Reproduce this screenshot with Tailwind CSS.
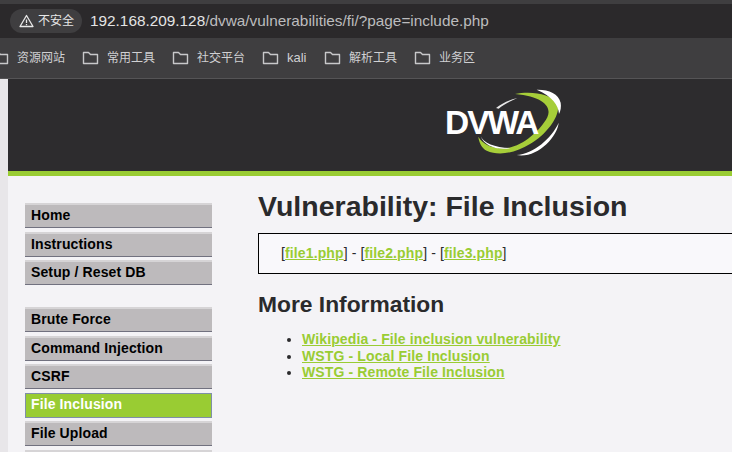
<!DOCTYPE html>
<html lang="en">
<head>
<meta charset="UTF-8">
<title>DVWA File Inclusion</title>
<script src="https://cdn.jsdelivr.net/npm/@tailwindcss/browser@4"></script>
</head>
<body class="w-[732px] h-[452px] overflow-hidden bg-[#f4f3f6] font-['Liberation_Sans','Noto_Sans_CJK_SC',sans-serif]">
  <!-- browser chrome -->
  <div class="h-[79px] bg-[#3f3e40] border-b border-[#555456] pt-[4px]">
    <div class="h-[34px] bg-[#2b292b] flex items-center pl-[10px]">
      <div class="h-[24px] w-[72px] rounded-full bg-[#3f3e40] flex items-center pl-[9px] gap-[4px] text-[12px] text-[#e6e6e6] shrink-0">
        <svg width="15" height="14" viewBox="0 0 15 14" fill="none" stroke="#e8e8e8" stroke-width="1.3"><path d="M7.5 1.5 L14 12.5 H1 Z" stroke-linejoin="round"/><path d="M7.5 5.5 V9 M7.5 10 V11.2"/></svg>
        <span>不安全</span>
      </div>
      <div class="ml-[8px] text-[15.35px] text-[#e4e4e4] whitespace-nowrap">192.168.209.128<span class="text-[#bcbcbe]">/dvwa/vulnerabilities/fi/?page=include.php</span></div>
    </div>
    <div class="h-[40px] flex items-center text-[12px] text-[#d0d0d2] -ml-[8px]">
      <div class="flex items-center w-[90px] gap-[8px]"><svg width="17" height="14" viewBox="0 0 17 14" fill="none" stroke="#c8c8ca" stroke-width="1.4"><path d="M1.5 12.5 V1.5 H6.5 L8.5 3.5 H15.5 V12.5 Z" stroke-linejoin="round"/></svg><span>资源网站</span></div>
      <div class="flex items-center w-[90px] gap-[8px]"><svg width="17" height="14" viewBox="0 0 17 14" fill="none" stroke="#c8c8ca" stroke-width="1.4"><path d="M1.5 12.5 V1.5 H6.5 L8.5 3.5 H15.5 V12.5 Z" stroke-linejoin="round"/></svg><span>常用工具</span></div>
      <div class="flex items-center w-[90px] gap-[8px]"><svg width="17" height="14" viewBox="0 0 17 14" fill="none" stroke="#c8c8ca" stroke-width="1.4"><path d="M1.5 12.5 V1.5 H6.5 L8.5 3.5 H15.5 V12.5 Z" stroke-linejoin="round"/></svg><span>社交平台</span></div>
      <div class="flex items-center w-[62px] gap-[8px]"><svg width="17" height="14" viewBox="0 0 17 14" fill="none" stroke="#c8c8ca" stroke-width="1.4"><path d="M1.5 12.5 V1.5 H6.5 L8.5 3.5 H15.5 V12.5 Z" stroke-linejoin="round"/></svg><span class="text-[13px]">kali</span></div>
      <div class="flex items-center w-[90px] gap-[8px]"><svg width="17" height="14" viewBox="0 0 17 14" fill="none" stroke="#c8c8ca" stroke-width="1.4"><path d="M1.5 12.5 V1.5 H6.5 L8.5 3.5 H15.5 V12.5 Z" stroke-linejoin="round"/></svg><span>解析工具</span></div>
      <div class="flex items-center w-[90px] gap-[8px]"><svg width="17" height="14" viewBox="0 0 17 14" fill="none" stroke="#c8c8ca" stroke-width="1.4"><path d="M1.5 12.5 V1.5 H6.5 L8.5 3.5 H15.5 V12.5 Z" stroke-linejoin="round"/></svg><span>业务区</span></div>
    </div>
  </div>

  <div class="flex h-[373px] overflow-hidden">
    <div class="w-[8px] bg-[#e8e6e9] shrink-0"></div>
    <div class="flex-1 min-w-0">
      <!-- dvwa header -->
      <div class="h-[92px] bg-[#2d2c2e] pl-[432px] pt-[6px]">
        <div class="relative w-[130px] h-[75px]">
          <svg class="absolute inset-0" width="130" height="75" viewBox="60 15 390 225" fill="none">
            <path d="M285 42 C330 32 395 40 412 72 C424 100 385 160 330 192 C285 220 235 228 200 212 C185 204 177 188 175 170 C190 196 225 208 262 204 C310 198 362 150 382 112 C396 82 372 50 285 42 Z" fill="#a6ce39"/>
            <path d="M350 29 C385 28 416 40 422 68 C424 80 422 92 417 102 C416 76 396 48 350 29 Z" fill="#ffffff"/>
            <path d="M290 225 C340 222 395 175 416 128 C412 172 350 236 290 225 Z" fill="#ffffff"/>
            <path d="M228 84 C245 70 268 60 292 54 C270 64 250 74 236 86 Z" fill="#e8e8e8"/>
            <path d="M182 168 C190 188 225 204 272 204 C232 212 192 198 182 168 Z" fill="#ffffff"/>
          </svg>
          <span class="absolute left-[5px] top-[18px] text-[33.5px] leading-[40px] font-bold text-white tracking-[-2px] whitespace-nowrap">DVWA</span>
        </div>
      </div>
      <div class="h-[5px] bg-[#9c3]"></div>

      <div class="flex">
        <!-- left menu -->
        <div class="w-[204px] ml-[17px] pt-[27px] shrink-0 text-[14px] font-bold text-black tracking-[0.12px]">
          <div class="flex flex-col gap-[3.5px]">
            <div class="h-[25px] leading-[20px] pl-[6px] bg-[#bdbabc] border-t-2 border-b border-t-[#d6d4d6] border-b-[#71717f] w-[187px]">Home</div>
            <div class="h-[25px] leading-[20px] pl-[6px] bg-[#bdbabc] border-t-2 border-b border-t-[#d6d4d6] border-b-[#71717f] w-[187px]">Instructions</div>
            <div class="h-[25px] leading-[20px] pl-[6px] bg-[#bdbabc] border-t-2 border-b border-t-[#d6d4d6] border-b-[#71717f] w-[187px]">Setup / Reset DB</div>
          </div>
          <div class="flex flex-col gap-[3.5px] mt-[22px]">
            <div class="h-[25px] leading-[20px] pl-[6px] bg-[#bdbabc] border-t-2 border-b border-t-[#d6d4d6] border-b-[#71717f] w-[187px]">Brute Force</div>
            <div class="h-[25px] leading-[20px] pl-[6px] bg-[#bdbabc] border-t-2 border-b border-t-[#d6d4d6] border-b-[#71717f] w-[187px]">Command Injection</div>
            <div class="h-[25px] leading-[20px] pl-[6px] bg-[#bdbabc] border-t-2 border-b border-t-[#d6d4d6] border-b-[#71717f] w-[187px]">CSRF</div>
            <div class="h-[25px] leading-[21px] pl-[5px] bg-[#9c3] text-white border border-[#7f8fa8] w-[187px]">File Inclusion</div>
            <div class="h-[25px] leading-[20px] pl-[6px] bg-[#bdbabc] border-t-2 border-b border-t-[#d6d4d6] border-b-[#71717f] w-[187px]">File Upload</div>
            <div class="h-[25px] bg-[#bdbabc] border-t-2 border-t-[#d6d4d6] w-[187px]"></div>
          </div>
        </div>

        <!-- main -->
        <div class="ml-[29px] flex-1 min-w-0 text-[#2a2a2c]">
          <h1 class="mt-[13px] text-[28.5px] leading-[34px] font-bold whitespace-nowrap">Vulnerability: File Inclusion</h1>
          <div class="mt-[10px] h-[41px] w-[480px] bg-[#f9f8fb] border border-black border-r-0 pl-[22px] text-[14px] leading-[38px] tracking-[0.12px] whitespace-nowrap">
            [<a class="font-bold text-[#9c3] underline" href="#">file1.php</a>] - [<a class="font-bold text-[#9c3] underline" href="#">file2.php</a>] - [<a class="font-bold text-[#9c3] underline" href="#">file3.php</a>]
          </div>
          <h2 class="mt-[16px] text-[22.8px] leading-[28px] font-bold whitespace-nowrap">More Information</h2>
          <ul class="mt-[13px] ml-[44px] list-disc text-[14px] leading-[16.5px] font-bold tracking-[0.125px] whitespace-nowrap">
            <li><a class="text-[#9c3] underline" href="#">Wikipedia - File inclusion vulnerability</a></li>
            <li><a class="text-[#9c3] underline" href="#">WSTG - Local File Inclusion</a></li>
            <li><a class="text-[#9c3] underline" href="#">WSTG - Remote File Inclusion</a></li>
          </ul>
        </div>
      </div>
    </div>
  </div>
</body>
</html>
